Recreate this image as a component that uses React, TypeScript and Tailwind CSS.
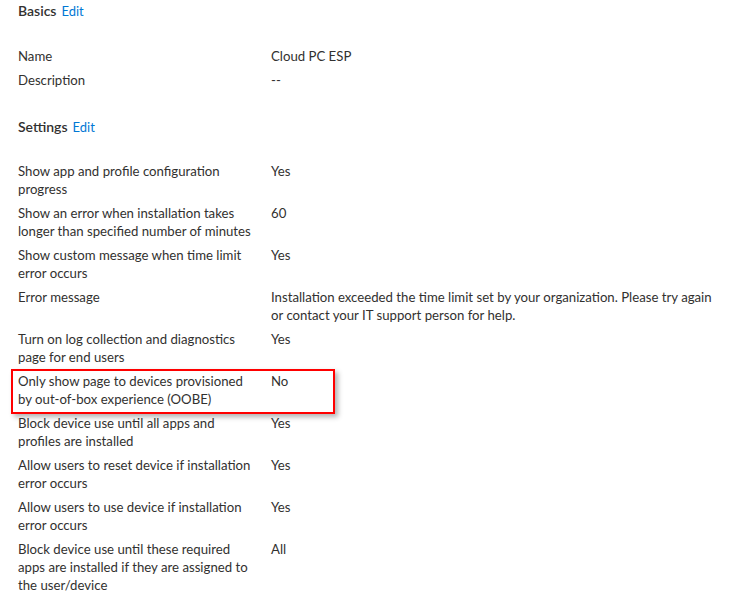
import React from "react";

type Row = { label: string[]; value: string[]; highlight?: boolean };

const basics: Row[] = [
  { label: ["Name"], value: ["Cloud PC ESP"] },
  { label: ["Description"], value: ["--"] },
];

const settings: Row[] = [
  { label: ["Show app and profile configuration", "progress"], value: ["Yes"] },
  { label: ["Show an error when installation takes", "longer than specified number of minutes"], value: ["60"] },
  { label: ["Show custom message when time limit", "error occurs"], value: ["Yes"] },
  {
    label: ["Error message"],
    value: [
      "Installation exceeded the time limit set by your organization. Please try again",
      "or contact your IT support person for help.",
    ],
  },
  { label: ["Turn on log collection and diagnostics", "page for end users"], value: ["Yes"] },
  { label: ["Only show page to devices provisioned", "by out-of-box experience (OOBE)"], value: ["No"], highlight: true },
  { label: ["Block device use until all apps and", "profiles are installed"], value: ["Yes"] },
  { label: ["Allow users to reset device if installation", "error occurs"], value: ["Yes"] },
  { label: ["Allow users to use device if installation", "error occurs"], value: ["Yes"] },
  {
    label: ["Block device use until these required", "apps are installed if they are assigned to", "the user/device"],
    value: ["All"],
  },
];

function Heading({ title }: { title: string }) {
  return (
    <div className="flex items-baseline gap-[5px] h-5 leading-5">
      <span className="text-[14px] font-semibold text-[#323130]">{title}</span>
      <span className="text-[13px] text-[#0078d4] cursor-pointer">Edit</span>
    </div>
  );
}

function Rows({ rows }: { rows: Row[] }) {
  return (
    <div className="flex flex-col gap-[6px]">
      {rows.map((r, i) => (
        <div key={i} className="relative flex text-[13.2px] leading-[18px] text-[#323130]">
          <div className="w-[253px] shrink-0">
            {r.label.map((l, j) => (
              <div key={j} className="whitespace-nowrap">{l}</div>
            ))}
          </div>
          <div>
            {r.value.map((v, j) => (
              <div key={j} className="whitespace-nowrap">{v}</div>
            ))}
          </div>
          {r.highlight && (
            <div className="absolute left-[-7px] top-[-3px] w-[324px] h-[45px] border-2 border-[#ff0000] shadow-[3px_3px_5px_rgba(0,0,0,0.3)] pointer-events-none" />
          )}
        </div>
      ))}
    </div>
  );
}

export default function App() {
  return (
    <div
      className="w-[732px] h-[606px] bg-white pl-[18px] pt-[1px] overflow-hidden"
      style={{ fontFamily: '"Segoe UI", Lato, "Open Sans", sans-serif' }}
    >
      <Heading title="Basics" />
      <div className="mt-[26px]">
        <Rows rows={basics} />
      </div>
      <div className="mt-[28px]">
        <Heading title="Settings" />
      </div>
      <div className="mt-[25px]">
        <Rows rows={settings} />
      </div>
    </div>
  );
}
